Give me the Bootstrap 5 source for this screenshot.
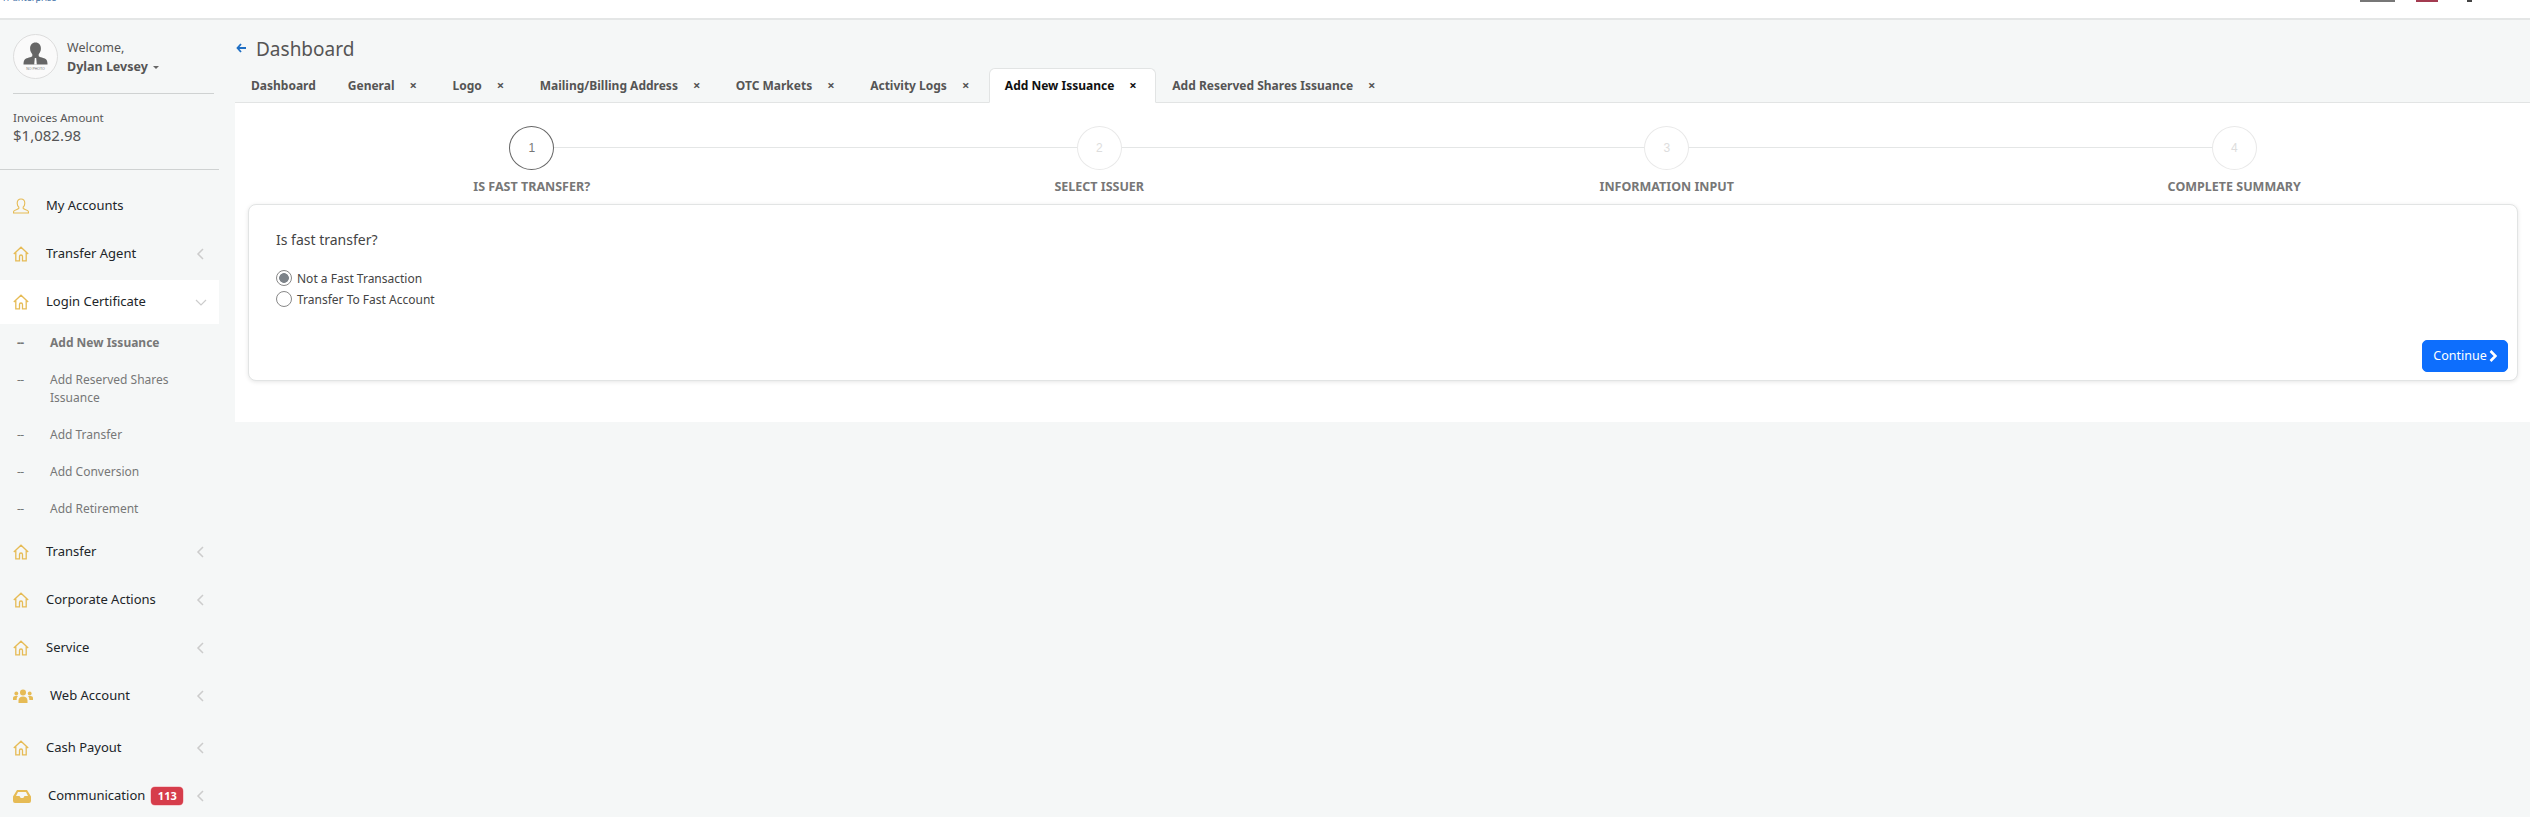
<!DOCTYPE html>
<html lang="en">
<head>
    <meta charset="UTF-8">
    <meta name="viewport" content="width=device-width, initial-scale=1.0">
    <title>Dashboard</title>
    <link href="https://cdn.jsdelivr.net/npm/bootstrap@5.3.0/dist/css/bootstrap.min.css" rel="stylesheet">
    <style>
        html, body { height: 100%; overflow: hidden; }
        body { background: #f5f7f7; font-family: "Noto Sans", "Liberation Sans", sans-serif; font-size: 13px; color: #212529; }
        .top-strip { height: 20px; background: #fff; border-bottom: 2px solid #e4e6e6; overflow: hidden; }
        .top-logo { margin-top: -10px; padding-left: 3px; font-size: 9px; line-height: 15px; color: #3b6ea5; }
        .top-marks { gap: 21px; padding-right: 58px; }
        .top-marks span { display: block; height: 2px; }
        .mark-grey { width: 35px; background: #777; }
        .mark-red { width: 22px; background: #a33b50; }
        .mark-dark { width: 5px; background: #444; margin-left: 8px; }

        .side-col { width: 235px; flex-shrink: 0; }
        .side-profile { width: 201px; margin-left: 13px; height: 74px; padding-top: 14px; border-bottom: 1px solid #cfd2d2; color: #555; gap: 9px; }
        .side-avatar { width: 45px; height: 45px; border: 1px solid #ddd; border-radius: 50%; background: #fafafa; flex-shrink: 0; }
        .side-avatar svg { display: block; }
        .no-photo { font-size: 3.5px; fill: #777; font-family: "Liberation Sans", sans-serif; }
        .side-who { padding-top: 4px; }
        .side-welcome { font-size: 12.5px; line-height: 19px; }
        .side-name { font-weight: 700; font-size: 12.5px; line-height: 19px; }
        .side-name i { display: inline-block; margin-left: 5px; vertical-align: 2px; border-left: 3px solid transparent; border-right: 3px solid transparent; border-top: 3px solid #666; }
        .side-invoices { width: 219px; height: 76px; padding: 15px 0 0 13px; border-bottom: 1px solid #cfd2d2; color: #555; }
        .inv-label { font-size: 11.5px; line-height: 17px; }
        .inv-value { font-size: 15px; line-height: 18px; }
        .side-menu { margin-top: 12px; width: 219px; }
        .menu-row { position: relative; height: 44px; margin: 2px 0; padding: 0 0 0 13px; color: #212529; }
        .menu-row.is-open { background: #fff; }
        .menu-row .menu-ico { width: 33px; flex-shrink: 0; }
        .menu-row .menu-ico svg { display: block; }
        .menu-row .menu-chev { position: absolute; left: 194px; top: 50%; margin-top: -7px; }
        .web-row { margin-bottom: 6px; }
        .web-row .menu-ico { width: 37px; }
        .comm-row .menu-ico { width: 35px; }
        .sub-menu { margin-top: -2px; margin-bottom: 1px; padding: 0 0 0 17px; list-style: none; color: #777; font-size: 12px; line-height: 18px; }
        .sub-menu li { display: flex; padding: 9.5px 20px 9.5px 0; }
        .sub-menu li::before { content: "--"; width: 33px; flex-shrink: 0; letter-spacing: -.5px; }
        .sub-menu li.is-here { font-weight: 700; }
        .count-pill { margin-left: 6px; padding: 0; width: 32px; height: 18px; line-height: 18px; border-radius: 4px; font-size: 11px; font-weight: 700; background: #d63d4b; box-shadow: 0 0 0 0.5px #f3a6ae; }

        .main-col { flex: 1 1 0; min-width: 0; }
        .page-head { height: 48px; padding: 15px 0 0 1px; gap: 10px; color: #555; }
        .page-head h1 { font-size: 19px; line-height: 28px; margin: 0; font-weight: 400; }
        .tab-bar { height: 35px; border-bottom: 1px solid #e2e4e4; flex-wrap: nowrap; }
        .tab-bar .nav-link { height: 35px; padding: 0 15px; margin: 0; border: 1px solid transparent; border-radius: 6px 6px 0 0; color: #555; font-size: 12px; font-weight: 700; display: flex; align-items: center; white-space: nowrap; }
        .tab-bar .nav-link.active { color: #111; background: #fff; border-color: #e2e4e4 #e2e4e4 #fff; }
        .tab-x { font-size: 13px; margin-left: 15px; margin-right: 3.5px; line-height: 1; }
        .white-panel { background: #fff; height: 319px; padding: 23px 12px 0 13px; }
        .wizard { display: grid; grid-template-columns: repeat(4, 1fr); margin-bottom: 9px; }
        .wizard-step { position: relative; text-align: center; }
        .wizard-step:not(:last-child)::after { content: ""; position: absolute; left: 50%; width: 100%; top: 21px; height: 1px; background: #e4e6e6; }
        .wizard-dot { position: relative; z-index: 1; width: 45px; height: 44px; margin: 0 auto 9px; border: 1px solid #e9e9e9; border-radius: 50%; background: #fff; color: #ddd; font-family: "Liberation Sans", sans-serif; font-size: 12px; line-height: 42px; }
        .wizard-step.is-current .wizard-dot { border-color: #666; color: #777; }
        .wizard-name { font-size: 12.5px; line-height: 16px; font-weight: 700; color: #777; text-transform: uppercase; }
        .issue-card { height: 177px; border-color: #e2e4e4; border-radius: 8px; box-shadow: 0 1px 4px rgba(0, 0, 0, .1); padding: 25px 9px 8px 27px; }
        .issue-q { font-size: 14px; line-height: 20px; color: #444; margin-bottom: 18px; }
        .issue-card .form-check { min-height: 21px; line-height: 21px; padding-left: 21px; margin: 0; font-size: 12px; color: #444; }
        .issue-card .form-check-input { width: 16px; height: 16px; margin: 2px 0 0 -21px; border-color: #888; background-color: #fff; }
        .issue-card .form-check-input:checked { background-image: radial-gradient(circle, #7d8389 0 4.5px, #fff 5.2px); background-color: #fff; border-color: #888; }
        .btn-go { height: 32px; width: 86px; padding: 0; font-size: 12.5px; border-radius: 5px; }
        .btn-go svg { margin-left: 2px; }
    </style>
</head>
<body>
    <!-- top bar, only the bottom of it is visible -->
    <div class="top-strip d-flex justify-content-between">
        <div class="top-logo">rr anterprise</div>
        <div class="top-marks d-flex"><span class="mark-grey"></span><span class="mark-red"></span><span class="mark-dark"></span></div>
    </div>

    <div class="d-flex">
        <!-- sidebar -->
        <div class="side-col">
            <div class="side-profile d-flex">
                <div class="side-avatar">
                    <svg width="43" height="43" viewBox="0 0 43 43">
                        <path d="M21.500 7.500c-3.400 0-5.600 2.600-5.400 6.300.1 2.300 1 4.100 2.200 5.500v2c-.8 1-5.600 1.500-7.300 2.900-1.200 1-1.500 3.300-1.500 5.300h24c0-2-.3-4.300-1.500-5.300-1.700-1.400-6.500-1.900-7.300-2.900v-2c1.200-1.400 2.100-3.200 2.200-5.500.2-3.700-2-6.300-5.400-6.300z" fill="#666"/>
                        <path d="M20.800 23h1.400l.6 6.500h-2.600z" fill="#fff"/>
                        <text x="21.500" y="34.500" text-anchor="middle" class="no-photo">NO PHOTO</text>
                    </svg>
                </div>
                <div class="side-who">
                    <div class="side-welcome">Welcome,</div>
                    <div class="side-name">Dylan Levsey<i></i></div>
                </div>
            </div>
            <div class="side-invoices">
                <div class="inv-label">Invoices Amount</div>
                <div class="inv-value">$1,082.98</div>
            </div>

            <div class="side-menu d-flex flex-column">
                <div class="menu-row d-flex align-items-center flex-shrink-0">
                    <span class="menu-ico"><svg width="16" height="16" viewBox="0 0 16 16" fill="none" stroke="#e6bb55" stroke-width="1.100"><path d="M8 1c-2.400 0-3.800 1.800-3.800 4.200 0 1.700.7 3.100 1.600 3.900v1.300c-.4.600-4.100 1.600-4.900 2.600-.3.400-.4 1-.4 2h15c0-1-.1-1.600-.4-2-.8-1-4.500-2-4.900-2.600V9.100c.9-.8 1.600-2.200 1.600-3.900C11.800 2.800 10.400 1 8 1z"/></svg></span>
                    My Accounts
                </div>
                <div class="menu-row d-flex align-items-center flex-shrink-0">
                    <span class="menu-ico"><svg width="16" height="16" viewBox="0 0 16 16" fill="none" stroke="#e6bb55" stroke-width="1.300"><path d="M.8 8 8 1.200 15.200 8M2.800 6.800v8h3.700v-4.300a1.500 1.500 0 0 1 3 0v4.300h3.700v-8"/></svg></span>
                    Transfer Agent
                    <svg class="menu-chev" width="14" height="14" viewBox="0 0 14 14" fill="none" stroke="#ccc" stroke-width="1.500"><path d="M9 2 4 7l5 5"/></svg>
                </div>
                <div class="menu-row is-open d-flex align-items-center flex-shrink-0">
                    <span class="menu-ico"><svg width="16" height="16" viewBox="0 0 16 16" fill="none" stroke="#e6bb55" stroke-width="1.300"><path d="M.8 8 8 1.200 15.200 8M2.800 6.800v8h3.700v-4.300a1.500 1.500 0 0 1 3 0v4.300h3.700v-8"/></svg></span>
                    Login Certificate
                    <svg class="menu-chev" width="14" height="14" viewBox="0 0 14 14" fill="none" stroke="#ccc" stroke-width="1.200"><path d="M2 5l5 5 5-5"/></svg>
                </div>
                <ul class="sub-menu">
                    <li class="is-here">Add New Issuance</li>
                    <li>Add Reserved Shares Issuance</li>
                    <li>Add Transfer</li>
                    <li>Add Conversion</li>
                    <li>Add Retirement</li>
                </ul>
                <div class="menu-row d-flex align-items-center flex-shrink-0">
                    <span class="menu-ico"><svg width="16" height="16" viewBox="0 0 16 16" fill="none" stroke="#e6bb55" stroke-width="1.300"><path d="M.8 8 8 1.200 15.200 8M2.800 6.800v8h3.700v-4.300a1.500 1.500 0 0 1 3 0v4.300h3.700v-8"/></svg></span>
                    Transfer
                    <svg class="menu-chev" width="14" height="14" viewBox="0 0 14 14" fill="none" stroke="#ccc" stroke-width="1.500"><path d="M9 2 4 7l5 5"/></svg>
                </div>
                <div class="menu-row d-flex align-items-center flex-shrink-0">
                    <span class="menu-ico"><svg width="16" height="16" viewBox="0 0 16 16" fill="none" stroke="#e6bb55" stroke-width="1.300"><path d="M.8 8 8 1.200 15.200 8M2.800 6.800v8h3.700v-4.300a1.500 1.500 0 0 1 3 0v4.300h3.700v-8"/></svg></span>
                    Corporate Actions
                    <svg class="menu-chev" width="14" height="14" viewBox="0 0 14 14" fill="none" stroke="#ccc" stroke-width="1.500"><path d="M9 2 4 7l5 5"/></svg>
                </div>
                <div class="menu-row d-flex align-items-center flex-shrink-0">
                    <span class="menu-ico"><svg width="16" height="16" viewBox="0 0 16 16" fill="none" stroke="#e6bb55" stroke-width="1.300"><path d="M.8 8 8 1.200 15.200 8M2.800 6.800v8h3.700v-4.300a1.500 1.500 0 0 1 3 0v4.300h3.700v-8"/></svg></span>
                    Service
                    <svg class="menu-chev" width="14" height="14" viewBox="0 0 14 14" fill="none" stroke="#ccc" stroke-width="1.500"><path d="M9 2 4 7l5 5"/></svg>
                </div>
                <div class="menu-row web-row d-flex align-items-center flex-shrink-0">
                    <span class="menu-ico"><svg width="20" height="14" viewBox="0 0 20 14" fill="#e6bb55"><circle cx="10" cy="3.500" r="3"/><path d="M5.500 14v-2.500c0-2.500 2-4 4.500-4s4.500 1.500 4.500 4V14z"/><circle cx="3.300" cy="4.500" r="1.900"/><circle cx="16.700" cy="4.500" r="1.900"/><path d="M0 11V9c0-1.300 1-2 2.300-2H5c-.9.900-1.300 2-1.300 3.500V11zM20 11V9c0-1.300-1-2-2.300-2H15c.9.900 1.300 2 1.300 3.500V11z"/></svg></span>
                    Web Account
                    <svg class="menu-chev" width="14" height="14" viewBox="0 0 14 14" fill="none" stroke="#ccc" stroke-width="1.500"><path d="M9 2 4 7l5 5"/></svg>
                </div>
                <div class="menu-row d-flex align-items-center flex-shrink-0">
                    <span class="menu-ico"><svg width="16" height="16" viewBox="0 0 16 16" fill="none" stroke="#e6bb55" stroke-width="1.300"><path d="M.8 8 8 1.200 15.200 8M2.800 6.800v8h3.700v-4.300a1.500 1.500 0 0 1 3 0v4.300h3.700v-8"/></svg></span>
                    Cash Payout
                    <svg class="menu-chev" width="14" height="14" viewBox="0 0 14 14" fill="none" stroke="#ccc" stroke-width="1.500"><path d="M9 2 4 7l5 5"/></svg>
                </div>
                <div class="menu-row comm-row d-flex align-items-center flex-shrink-0">
                    <span class="menu-ico"><svg width="18" height="13" viewBox="0 0 18 13" fill="#e6bb55"><path d="M4 0h10l4 6.500V11a2 2 0 0 1-2 2H2a2 2 0 0 1-2-2V6.500zM3 6h3.500l1.200 2h2.600l1.200-2H15l-2-4H5z" fill-rule="evenodd"/></svg></span>
                    Communication
                    <span class="badge count-pill">113</span>
                    <svg class="menu-chev" width="14" height="14" viewBox="0 0 14 14" fill="none" stroke="#ccc" stroke-width="1.500"><path d="M9 2 4 7l5 5"/></svg>
                </div>
            </div>
        </div>

        <!-- main -->
        <div class="main-col">
            <div class="page-head d-flex align-items-start">
                <svg class="mt-2" width="10" height="10" viewBox="0 0 10 10" fill="none" stroke="#1f6fc4" stroke-width="1.800"><path d="M5 1 1.500 5 5 9M1.500 5H10"/></svg>
                <h1>Dashboard</h1>
            </div>

            <ul class="nav tab-bar">
                <li class="nav-item"><a class="nav-link" href="#">Dashboard</a></li>
                <li class="nav-item"><a class="nav-link" href="#">General<span class="tab-x">×</span></a></li>
                <li class="nav-item"><a class="nav-link" href="#">Logo<span class="tab-x">×</span></a></li>
                <li class="nav-item"><a class="nav-link" href="#">Mailing/Billing Address<span class="tab-x">×</span></a></li>
                <li class="nav-item"><a class="nav-link" href="#">OTC Markets<span class="tab-x">×</span></a></li>
                <li class="nav-item"><a class="nav-link" href="#">Activity Logs<span class="tab-x">×</span></a></li>
                <li class="nav-item"><a class="nav-link active" href="#">Add New Issuance<span class="tab-x">×</span></a></li>
                <li class="nav-item"><a class="nav-link" href="#">Add Reserved Shares Issuance<span class="tab-x">×</span></a></li>
            </ul>

            <div class="white-panel">
                <div class="wizard">
                    <div class="wizard-step is-current"><div class="wizard-dot">1</div><div class="wizard-name">Is Fast Transfer?</div></div>
                    <div class="wizard-step"><div class="wizard-dot">2</div><div class="wizard-name">Select Issuer</div></div>
                    <div class="wizard-step"><div class="wizard-dot">3</div><div class="wizard-name">Information Input</div></div>
                    <div class="wizard-step"><div class="wizard-dot">4</div><div class="wizard-name">Complete Summary</div></div>
                </div>

                <div class="card issue-card">
                    <div class="issue-q">Is fast transfer?</div>
                    <div class="form-check">
                        <input class="form-check-input" type="radio" name="fastTransfer" id="notFast" checked>
                        <label class="form-check-label" for="notFast">Not a Fast Transaction</label>
                    </div>
                    <div class="form-check">
                        <input class="form-check-input" type="radio" name="fastTransfer" id="toFast">
                        <label class="form-check-label" for="toFast">Transfer To Fast Account</label>
                    </div>
                    <div class="mt-auto d-flex justify-content-end">
                        <button class="btn btn-primary btn-go d-flex align-items-center justify-content-center" type="button">Continue
                            <svg width="8" height="12" viewBox="0 0 8 12" fill="none" stroke="#fff" stroke-width="2.600"><path d="M1.500 1 6.500 6l-5 5"/></svg>
                        </button>
                    </div>
                </div>
            </div>
        </div>
    </div>

    <script src="https://cdn.jsdelivr.net/npm/bootstrap@5.3.0/dist/js/bootstrap.bundle.min.js"></script>
</body>
</html>
